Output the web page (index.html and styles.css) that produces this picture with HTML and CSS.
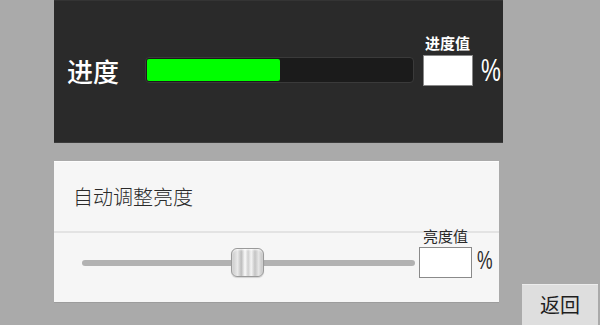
FILE: index.html
```html
<!DOCTYPE html>
<html lang="zh-CN">
<head>
  <meta charset="UTF-8" />
  <meta name="viewport" content="width=device-width, initial-scale=1.0"/>
  <title>进度与亮度</title>
  <link rel="stylesheet" href="styles.css">
</head>
<body>

<div class="progress-panel">
  <div class="progress-grid">
    <div class="progress-label">进度</div>
    <div class="progress-bar">
      <div class="progress-fill" style="width: 50%"></div>
    </div>
    <div class="value-caption">进度值</div>
    <div class="value-box"></div>
    <div class="percent">%</div>
  </div>
</div>

<div class="bottom-row">
  <div class="brightness-panel">
    <div class="brightness-head">自动调整亮度</div>
    <div class="brightness-grid">
      <div class="slider">
        <div class="slider-track"></div>
        <div class="slider-thumb"></div>
      </div>
      <div class="bright-caption">亮度值</div>
      <div class="bright-box"></div>
      <div class="bright-percent">%</div>
    </div>
  </div>
  <button class="back-btn">返回</button>
</div>

</body>
</html>
```

FILE: styles.css
```css
body {
  margin: 0;
  background: #aaaaaa;
  font-family: "Noto Sans CJK SC", "Noto Sans", sans-serif;
  width: 600px;
  height: 325px;
  overflow: hidden;
}

/* dark progress panel */
.progress-panel {
  margin-left: 54px;
  width: 449px;
  height: 143px;
  box-sizing: border-box;
  background: #2a2a2a;
  border-top: 1px solid #343434;
  border-bottom: 1px solid #3c3c3c;
  padding-top: 34px;
  padding-left: 13px;
}

.progress-grid {
  display: grid;
  grid-template-columns: 78px 278px 58px auto;
  grid-template-rows: 15px 31px;
  row-gap: 5px;
  align-items: center;
}

.progress-label {
  grid-column: 1;
  grid-row: 2;
  color: #fff;
  font-size: 26px;
  font-weight: 500;
  line-height: 26px;
  white-space: nowrap;
}

.progress-bar {
  grid-column: 2;
  grid-row: 2;
  width: 269px;
  height: 26px;
  box-sizing: border-box;
  background: #1b1b1b;
  border: 1px solid #3a3a3a;
  border-radius: 4px;
  padding: 1px;
  margin-top: -1px;
}

.progress-fill {
  height: 100%;
  background: #00ff00;
  border-radius: 2px;
}

.value-caption {
  grid-column: 3;
  grid-row: 1;
  margin-left: 2px;
  color: #fff;
  font-size: 15px;
  font-weight: 700;
  line-height: 15px;
  white-space: nowrap;
}

.value-box {
  grid-column: 3;
  grid-row: 2;
  width: 50px;
  height: 31px;
  box-sizing: border-box;
  background: #fff;
  border: 1px solid #888;
}

.percent {
  grid-column: 4;
  grid-row: 2;
  justify-self: start;
  color: #fff;
  font-family: "Liberation Sans", sans-serif;
  font-size: 31px;
  line-height: 30px;
  transform: scaleX(0.72);
  transform-origin: left center;
}

/* bottom row */
.bottom-row {
  display: flex;
  align-items: flex-start;
  margin-top: 18px;
  padding-left: 54px;
}

.brightness-panel {
  width: 445px;
  height: 142px;
  box-sizing: border-box;
  background: #f6f6f6;
  border-top: 1px solid #fdfdfd;
  border-bottom: 1px solid #9c9c9c;
}

.brightness-head {
  height: 69px;
  display: flex;
  align-items: center;
  padding-left: 19px;
  font-size: 20px;
  font-weight: 300;
  color: #2a2a2a;
  border-bottom: 2px solid #e3e3e3;
}

.brightness-grid {
  display: grid;
  grid-template-columns: 337px 58px auto;
  grid-template-rows: 15px 31px;
  row-gap: 4px;
  align-items: center;
  padding-left: 28px;
  margin-top: -5px;
}

.slider {
  grid-column: 1;
  grid-row: 2;
  position: relative;
  height: 31px;
  display: flex;
  align-items: center;
}

.slider-track {
  width: 333px;
  height: 6px;
  border-radius: 3px;
  background: #b2b2b2;
}

.slider-thumb {
  position: absolute;
  left: 149px;
  top: 1px;
  width: 33px;
  height: 29px;
  box-sizing: border-box;
  border: 1px solid #9a9a9a;
  border-radius: 6px;
  background: linear-gradient(to right,
    #c8c8c8 0%, #e9e9e9 18%, #bdbdbd 30%, #fafafa 42%,
    #cfcfcf 52%, #f4f4f4 62%, #c4c4c4 74%, #e6e6e6 86%, #bcbcbc 100%);
  box-shadow: inset 0 1px 2px rgba(255,255,255,0.8), 0 1px 1px rgba(0,0,0,0.15);
}

.bright-caption {
  grid-column: 2;
  grid-row: 1;
  margin-left: 4px;
  font-size: 15px;
  line-height: 15px;
  color: #2a2a2a;
  white-space: nowrap;
}

.bright-box {
  grid-column: 2;
  grid-row: 2;
  width: 53px;
  height: 31px;
  box-sizing: border-box;
  background: #fff;
  border: 1px solid #8a8a8a;
}

.bright-percent {
  grid-column: 3;
  grid-row: 2;
  justify-self: start;
  color: #2a2a2a;
  font-family: "Liberation Sans", sans-serif;
  font-size: 25px;
  line-height: 25px;
  margin-top: -5px;
  transform: scaleX(0.7);
  transform-origin: left center;
}

.back-btn {
  margin-top: 123px;
  margin-left: 23px;
  width: 76px;
  height: 48px;
  border: none;
  border-top: 1px solid #ececec;
  background: #dedede;
  color: #1e1e1e;
  font-family: "Noto Sans CJK SC", sans-serif;
  font-size: 20px;
  padding: 0 0 8px;
  line-height: 20px;
}
```
